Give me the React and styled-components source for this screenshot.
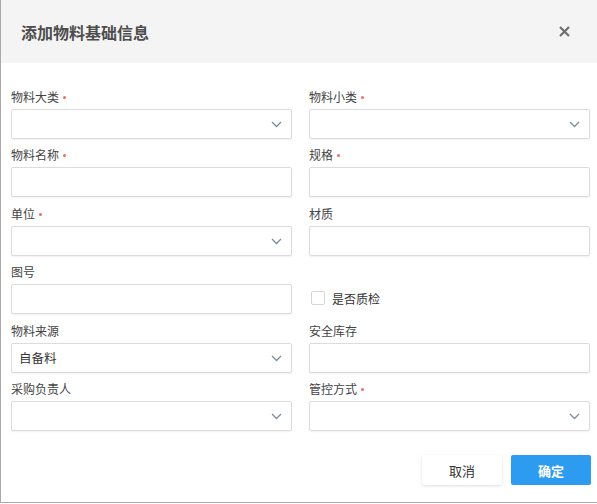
import React from 'react';
import styled, { createGlobalStyle } from 'styled-components';

const GlobalStyle = createGlobalStyle`
  html, body { margin: 0; padding: 0; background: #fff; }
  body { font-family: "Noto Sans CJK SC", "Noto Sans", sans-serif; }
  * { box-sizing: border-box; }
`;

const Dialog = styled.div`
  width: 597px;
  height: 503px;
  border-left: 1px solid #a9a9a9;
  border-bottom: 1px solid #a9a9a9;
  background: #fff;
  display: flex;
  flex-direction: column;
`;

const Header = styled.div`
  height: 63px;
  background: #f4f4f4;
  display: flex;
  align-items: center;
  justify-content: space-between;
  padding: 0 25px 0 20px;
`;

const Title = styled.h3`
  margin: 0;
  font-size: 16px;
  font-weight: bold;
  color: #4d4d4d;
`;

const Close = styled.button`
  border: none;
  background: transparent;
  padding: 0;
  width: 16px;
  height: 16px;
  display: flex;
  align-items: center;
  justify-content: center;
  cursor: pointer;
`;

const Form = styled.div`
  display: grid;
  grid-template-columns: 281px 281px;
  column-gap: 17px;
  padding: 25px 0 0 10px;
`;

const Field = styled.div`
  display: flex;
  flex-direction: column;
  height: 58.4px;
`;

const Label = styled.label`
  height: 18px;
  line-height: 18px;
  font-size: 12px;
  color: #444;
  margin-bottom: 3px;
  display: flex;
  align-items: center;
`;

const Star = styled.span`
  width: 3px;
  height: 3px;
  border-radius: 50%;
  background: #f26a6a;
  margin: 1px 0 0 4px;
`;

const Box = styled.div`
  position: relative;
  height: 30px;
  border: 1px solid #dcdcdc;
  border-radius: 2px;
  box-shadow: 0 1px 2px rgba(0, 0, 0, 0.06);
  background: #fff;
  display: flex;
  align-items: center;
  padding: 0 7px;
  font-size: 12.5px;
  color: #333;
`;

const Chevron = styled.svg`
  position: absolute;
  right: 9px;
  top: 11px;
`;

const CheckRow = styled.div`
  display: flex;
  align-items: center;
  height: 58.4px;
  padding: 12px 0 0 2px;
  font-size: 12px;
  color: #333;
  gap: 7px;
`;

const CheckBox = styled.span`
  width: 14px;
  height: 14px;
  border: 1px solid #d6d6d6;
  border-radius: 2px;
  background: #fff;
`;

const Footer = styled.div`
  display: flex;
  justify-content: flex-end;
  gap: 9px;
  padding: 17px 6px 0 0;
`;

const Button = styled.button`
  width: 80px;
  height: 30px;
  border: none;
  border-radius: 2px;
  font-family: inherit;
  font-size: 13px;
  cursor: pointer;
  background: ${p => (p.$primary ? '#2d9cf0' : '#fff')};
  color: ${p => (p.$primary ? '#fff' : '#333')};
  font-weight: ${p => (p.$primary ? 'bold' : 'normal')};
  box-shadow: ${p => (p.$primary ? 'none' : '0 1px 3px rgba(0,0,0,0.12)')};
`;

function Select({ value }) {
  return (
    <Box>
      {value}
      <Chevron width="11" height="7" viewBox="0 0 11 7">
        <path d="M1 1l4.5 4.5L10 1" fill="none" stroke="#7b8c9c" strokeWidth="1.3" />
      </Chevron>
    </Box>
  );
}

function FormField({ label, required, select, value }) {
  return (
    <Field>
      <Label>
        {label}
        {required && <Star />}
      </Label>
      {select ? <Select value={value} /> : <Box>{value}</Box>}
    </Field>
  );
}

export default function App() {
  return (
    <>
      <GlobalStyle />
      <Dialog>
        <Header>
          <Title>添加物料基础信息</Title>
          <Close>
            <svg width="11" height="11" viewBox="0 0 11 11">
              <path d="M1 1l9 9M10 1l-9 9" stroke="#6e6e6e" strokeWidth="2.2" />
            </svg>
          </Close>
        </Header>
        <Form>
          <FormField label="物料大类" required select />
          <FormField label="物料小类" required select />
          <FormField label="物料名称" required />
          <FormField label="规格" required />
          <FormField label="单位" required select />
          <FormField label="材质" />
          <FormField label="图号" />
          <CheckRow>
            <CheckBox />
            是否质检
          </CheckRow>
          <FormField label="物料来源" select value="自备料" />
          <FormField label="安全库存" />
          <FormField label="采购负责人" select />
          <FormField label="管控方式" required select />
        </Form>
        <Footer>
          <Button>取消</Button>
          <Button $primary>确定</Button>
        </Footer>
      </Dialog>
    </>
  );
}
